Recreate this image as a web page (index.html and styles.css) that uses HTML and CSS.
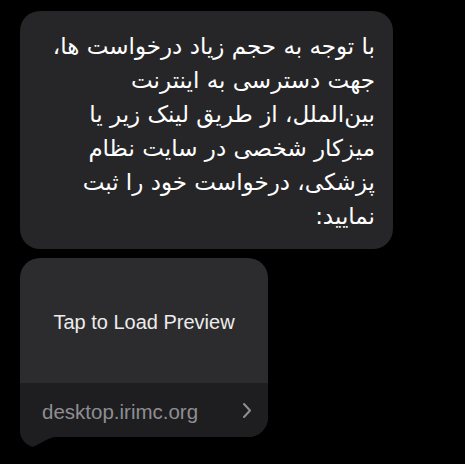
FILE: index.html
```html
<!DOCTYPE html>
<html lang="fa">
<head>
<meta charset="utf-8">
<link rel="stylesheet" href="styles.css">
</head>
<body>
<div class="thread">
  <div class="bubble msg" dir="rtl">
    <p>با توجه به حجم زیاد درخواست ها،<br>جهت دسترسی به اینترنت<br>بین‌الملل، از طریق لینک زیر یا<br>میزکار شخصی در سایت نظام<br>پزشکی، درخواست خود را ثبت<br>نمایید:</p>
  </div>
  <div class="bubble preview" dir="ltr">
    <div class="preview-top">Tap to Load Preview</div>
    <div class="preview-bottom">
      <span class="url">desktop.irimc.org</span>
      <svg class="chev" width="10" height="17" viewBox="0 0 10 17"><path d="M2 2 L8 8.5 L2 15" fill="none" stroke="#8e8e93" stroke-width="2" stroke-linecap="round" stroke-linejoin="round"/></svg>
    </div>
    <svg class="tail" width="40" height="30" viewBox="0 0 40 30"><path d="M0 0 L0 12 C0 20 6 26 13 28 C18 26 24 21 34 18 L34 0 Z" fill="#1e1e20"/></svg>
  </div>
</div>
</body>
</html>
```

FILE: styles.css
```css
html, body {
  margin: 0;
  padding: 0;
  background: #000;
}
body {
  min-height: 464px;
  box-sizing: border-box;
  padding: 11px 0 27px 20px;
}
.thread {
  display: flex;
  flex-direction: column;
  align-items: flex-start;
  gap: 9px;
}
.bubble {
  border-radius: 20px;
}
.msg {
  width: 373px;
  box-sizing: border-box;
  background: #262628;
  padding: 18px 18px 16px 18px;
  color: #fff;
  font-family: "DejaVu Sans", "Noto Sans", sans-serif;
  font-size: 23px;
  line-height: 34px;
  text-align: right;
}
.msg p {
  margin: 0;
}
.preview {
  position: relative;
  width: 248px;
  background: #2c2c2e;
  font-family: "Liberation Sans", Arial, sans-serif;
}
.preview-top {
  height: 125px;
  box-sizing: border-box;
  padding-top: 4px;
  display: flex;
  align-items: center;
  justify-content: center;
  color: #ececec;
  font-size: 20px;
}
.preview-bottom {
  height: 54px;
  background: #1e1e20;
  border-radius: 0 0 20px 20px;
  display: flex;
  align-items: center;
  justify-content: space-between;
  padding: 0 16px 0 22px;
}
.url {
  color: #8e8e93;
  font-size: 20.5px;
  margin-top: 4px;
}
.chev {
  display: block;
}
.tail {
  position: absolute;
  left: 0;
  top: 161px;
  display: block;
}
```
